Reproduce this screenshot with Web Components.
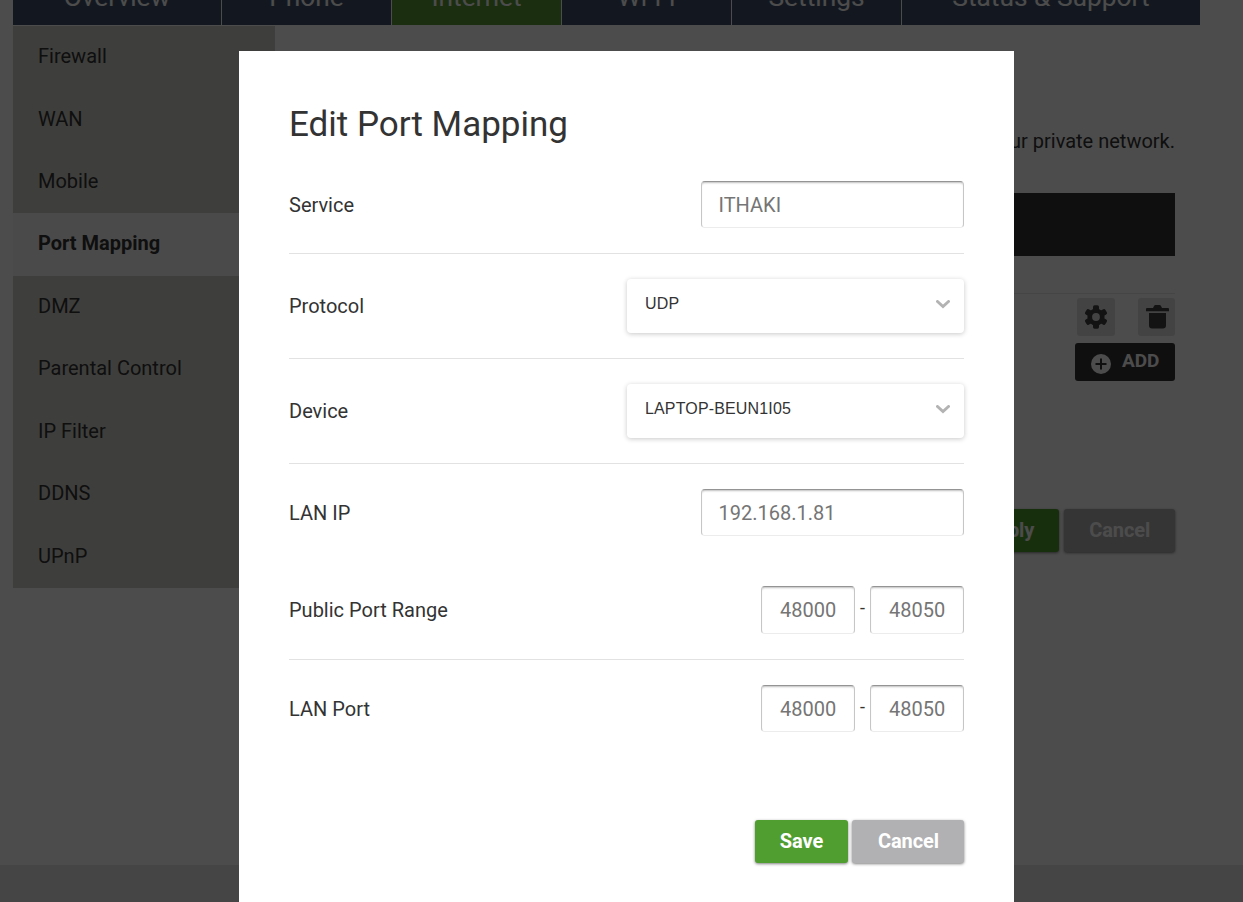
<!DOCTYPE html>
<html lang="en">
<head>
<meta charset="utf-8">
<title>Port Mapping</title>
<style>
  html, body { margin: 0; height: 100%; overflow: hidden; }
  body { font: 400 20px/24px Roboto, "Liberation Sans", sans-serif; color: #333; background: #fff; }
</style>
</head>
<body>
<router-page>
  <main-nav slot="nav">
    <nav-tab style="--w:208px">Overview</nav-tab>
    <nav-tab style="--w:169px">Phone</nav-tab>
    <nav-tab style="--w:169px" active>Internet</nav-tab>
    <nav-tab style="--w:169px">Wi-Fi</nav-tab>
    <nav-tab style="--w:169px">Settings</nav-tab>
    <nav-tab style="--w:298px">Status &amp; Support</nav-tab>
  </main-nav>
  <side-menu slot="side">
    <side-item>Firewall</side-item>
    <side-item>WAN</side-item>
    <side-item>Mobile</side-item>
    <side-item active>Port Mapping</side-item>
    <side-item>DMZ</side-item>
    <side-item>Parental Control</side-item>
    <side-item>IP Filter</side-item>
    <side-item>DDNS</side-item>
    <side-item>UPnP</side-item>
  </side-menu>
  <mapping-list>your private network.</mapping-list>
</router-page>

<modal-dialog>
  <span slot="title">Edit Port Mapping</span>
  <form-row label="Service" line><text-field style="--w:263px">ITHAKI</text-field></form-row>
  <form-row label="Protocol" line><select-field>UDP</select-field></form-row>
  <form-row label="Device" line><select-field>LAPTOP-BEUN1I05</select-field></form-row>
  <form-row label="LAN IP"><text-field style="--w:263px">192.168.1.81</text-field></form-row>
  <form-row label="Public Port Range" line><port-range from="48000" to="48050" style="--h:48px"></port-range></form-row>
  <form-row label="LAN Port"><port-range from="48000" to="48050"></port-range></form-row>
  <push-button slot="actions" kind="primary" style="--w:93px">Save</push-button>
  <push-button slot="actions" style="--w:112px">Cancel</push-button>
</modal-dialog>

<script>
const define = (name, html, setup) => customElements.define(name, class extends HTMLElement {
  constructor() {
    super();
    this.attachShadow({ mode: 'open' }).innerHTML = html;
  }
  connectedCallback() { if (setup) setup(this, this.shadowRoot); }
});

define('router-page', `
<style>
  :host { display: flex; flex-direction: column; height: 100vh; overflow: hidden; }
  .body { display: flex; flex: 1; margin: 1px 43px 0 13px; align-items: flex-start; }
  footer { height: 37px; background: #e6e6e6; }
</style>
<slot name="nav"></slot>
<div class="body"><slot name="side"></slot><slot></slot></div>
<footer></footer>`);

define('main-nav', `
<style>
  :host { display: flex; gap: 1px; margin-left: 13px; height: 25px; }
</style><slot></slot>`);

define('nav-tab', `
<style>
  :host { display: flex; align-items: flex-end; justify-content: center; width: var(--w);
    background: #42536b; color: #fff; font-size: 26.3px; line-height: 30px; }
  :host([active]) { background: #5a9a32; }
  span { margin-bottom: 13px; white-space: nowrap; }
</style><span><slot></slot></span>`);

define('side-menu', `
<style>
  :host { display: block; width: 262px; flex: none; background: #d0cfc8; }
</style><slot></slot>`);

define('side-item', `
<style>
  :host { display: flex; align-items: center; box-sizing: border-box; height: 62.45px; padding: 0 25px 2.3px; }
  :host([active]) { background: #f8f8f8; font-weight: 700; }
</style><slot></slot>`);

define('mapping-list', `
<style>
  :host { display: flex; flex-direction: column; flex: 1; padding: 103px 25px 0; }
  p { margin: 0; text-align: right; white-space: nowrap; }
  .head { height: 63px; margin-top: 40px; background: #333; }
  .row { display: flex; justify-content: flex-end; gap: 23px; margin-top: 37px; padding-top: 4px; border-top: 1px solid #e6e6e6; }
  .icon { display: grid; place-items: center; width: 38px; height: 38px; border-radius: 3px; background: #e1e1e1; }
  .icon + .icon { box-sizing: border-box; width: 37px; padding-left: 1px; }
  .add { display: flex; align-items: center; align-self: flex-end; box-sizing: border-box; width: 100px; height: 38px;
    margin-top: 7px; padding-left: 16px; gap: 11px; border-radius: 3px; background: #333; color: #fff; font-weight: 700; font-size: 19px; }
  .add svg { margin-top: 3px; }
  .add span { margin-top: -2px; }
  .actions { display: flex; justify-content: flex-end; gap: 5px; margin-top: 128px; }
  svg { display: block; }
</style>
<p><slot></slot></p>
<div class="head"></div>
<div class="row">
  <div class="icon"><svg width="24" height="24" viewBox="-12 -12 24 24"><g fill="#404040"><circle r="8.600"/><rect x="-3" y="-11.700" width="6" height="23.400" rx="1.600"/><rect x="-3" y="-11.700" width="6" height="23.400" rx="1.600" transform="rotate(60)"/><rect x="-3" y="-11.700" width="6" height="23.400" rx="1.600" transform="rotate(120)"/></g><circle r="3.900" fill="#e1e1e1"/></svg></div>
  <div class="icon"><svg width="23" height="24" viewBox="0 0 23 24" fill="#404040"><path d="M0 4q0-1 1-1h6l1-2q.5-1 1.500-1h4q1 0 1.500 1l1 2h6q1 0 1 1v2.300H0zM3 8h17v12.500q0 3-3 3H6q-3 0-3-3z"/></svg></div>
</div>
<div class="add">
  <svg width="20" height="20" viewBox="0 0 20 20"><circle cx="10" cy="10" r="10" fill="#fff"/><path d="M10 4.500v11M4.500 10h11" stroke="#333" stroke-width="2"/></svg>
  <span>ADD</span>
</div>
<div class="actions">
  <push-button kind="primary" style="--w:100px">Apply</push-button>
  <push-button style="--w:111.500px">Cancel</push-button>
</div>`);

define('push-button', `
<style>
  :host { display: flex; align-items: center; justify-content: center; box-sizing: border-box; width: var(--w); height: 43px; padding: 0 0 1px 1px;
    border-radius: 3px; background: #b1b1b3; color: #fff; font-weight: 700; font-size: 20px; letter-spacing: -.1px; box-shadow: 0 1px 3px rgba(0,0,0,.5); }
  :host([kind=primary]) { background: #509e2f; }
</style><slot></slot>`);

define('modal-dialog', `
<style>
  :host { position: fixed; inset: 0; display: flex; flex-direction: column; align-items: flex-start;
    background: rgba(0,0,0,.7); padding: 51px 0 0 239px; }
  .panel { box-sizing: border-box; width: 775px; flex: 1; background: #fff; padding: 52px 50px 0; }
  h2 { margin: 0 0 9px; font-weight: 400; font-size: 35px; line-height: 44px; }
  .actions { display: flex; justify-content: flex-end; gap: 4.500px; margin-top: 63px; }
  ::slotted(push-button) { height: 42.500px; }
</style>
<div class="panel">
  <h2><slot name="title"></slot></h2>
  <slot></slot>
  <div class="actions"><slot name="actions"></slot></div>
</div>`);

define('form-row', `
<style>
  :host { display: flex; align-items: center; justify-content: space-between; padding: 25px 0; }
  :host([line]) { border-bottom: 1px solid #e2e2e2; }
</style><label></label><slot></slot>`,
(el, root) => { root.querySelector('label').textContent = el.getAttribute('label'); });

define('text-field', `
<style>
  :host { display: flex; align-items: center; box-sizing: border-box; width: var(--w); height: var(--h, 47px); padding: 0 16.500px;
    color: #757575; background: #fff; border: 1px solid; border-color: #949494 #c6c6c6 #ececec; border-radius: 4px;
    box-shadow: inset 0 2px 2px -1px rgba(0,0,0,.25); }
</style><slot></slot>`);

define('port-range', `
<style>
  :host { display: flex; gap: 5px; }
  text-field { --w: 94px; padding: 0 0 0 18px; }
  span { width: 5px; padding-top: 10px; font-size: 18px; }
</style><text-field class="from"></text-field><span>-</span><text-field class="to"></text-field>`,
(el, root) => { for (const k of ['from', 'to']) root.querySelector('.' + k).textContent = el.getAttribute(k); });

define('select-field', `
<style>
  :host { display: flex; justify-content: space-between; align-items: flex-start; box-sizing: border-box; width: 337px; height: 54px;
    padding: 15px 14.500px 0 18px; border-radius: 4px; background: #fff; color: #333; box-shadow: 0 1px 5px rgba(0,0,0,.22);
    font: 16px/20px "Liberation Sans", sans-serif; letter-spacing: .15px; }
  svg { margin-top: 6px; }
</style><span><slot></slot></span>
<svg width="14" height="10" viewBox="0 0 14 10"><path d="M1.500 1.500 7 6.500l5.500-5" fill="none" stroke="#b3b3b3" stroke-width="3" stroke-linecap="round"/></svg>`);
</script>
</body>
</html>
